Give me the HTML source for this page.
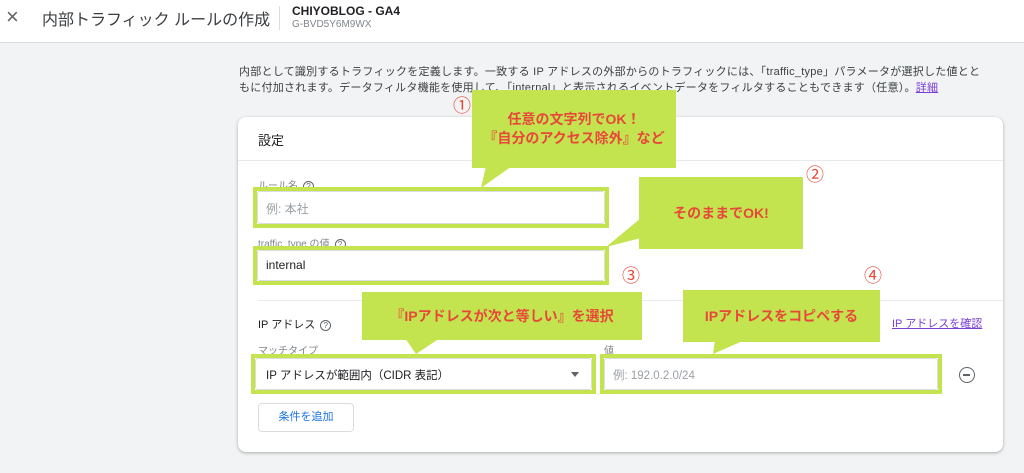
<!DOCTYPE html>
<html><head><meta charset="utf-8"><style>
*{box-sizing:border-box;margin:0;padding:0}
body{width:1024px;height:473px;overflow:hidden;background:#f1f3f4;font-family:"Liberation Sans","Noto Sans CJK JP",sans-serif;position:relative;color:#202124}
.a{position:absolute}
.hdr{left:0;top:0;width:1024px;height:43px;background:#fff;border-bottom:1px solid #dadce0}
.card{left:238px;top:117px;width:765px;height:335px;background:#fff;border-radius:8px;box-shadow:0 1px 3px rgba(0,0,0,.3)}
.lbl{font-size:10px;color:#80868b}
.inp{background:#fff;border:1px solid #dadce0;border-radius:3px}
.g{border:4px solid #c3e44f}
.call{background:#c3e44f;color:#e8483a;font-weight:bold;font-size:14px;text-align:center;display:flex;align-items:center;justify-content:center;line-height:19px}
.num{color:#e8483a;font-size:18px}
.q{display:inline-block;width:11px;height:11px;border:1px solid #5f6368;border-radius:50%;font-size:8px;line-height:9px;text-align:center;color:#5f6368;vertical-align:middle;margin-left:5px}
</style></head><body>
<div class="a hdr"></div>
<div class="a" style="left:6px;top:4px;font-size:22px;color:#5f6368">×</div>
<div class="a" style="left:42px;top:6px;font-size:16px;color:#3c4043">内部トラフィック ルールの作成</div>
<div class="a" style="left:279px;top:6px;width:1px;height:24px;background:#dadce0"></div>
<div class="a" style="left:292px;top:4px;font-size:12px;font-weight:bold">CHIYOBLOG - GA4</div>
<div class="a" style="left:292px;top:19px;font-size:10px;color:#80868b">G-BVD5Y6M9WX</div>
<div class="a" style="left:239px;top:64px;width:750px;font-size:11px;letter-spacing:0.25px;line-height:16px;color:#3c4043">内部として識別するトラフィックを定義します。一致する IP アドレスの外部からのトラフィックには、「traffic_type」パラメータが選択した値とともに付加されます。データフィルタ機能を使用して、「internal」と表示されるイベントデータをフィルタすることもできます（任意）。<span style="color:#7b3fd6;text-decoration:underline">詳細</span></div>
<div class="a card"></div>
<div class="a" style="left:258px;top:130px;font-size:13px">設定</div>
<div class="a" style="left:238px;top:160px;width:765px;height:1px;background:#e8eaed"></div>
<div class="a lbl" style="left:258px;top:177px">ルール名<span class="q">?</span></div>
<div class="a g" style="left:253px;top:187px;width:356px;height:41px"></div>
<div class="a inp" style="left:257px;top:191px;width:348px;height:33px;font-size:12px;color:#9aa0a6;padding:8px 8px">例: 本社</div>
<div class="a lbl" style="left:258px;top:235px">traffic_type の値<span class="q">?</span></div>
<div class="a g" style="left:253px;top:246px;width:356px;height:39px"></div>
<div class="a inp" style="left:257px;top:250px;width:348px;height:31px;font-size:12px;padding:7px 8px">internal</div>
<div class="a" style="left:258px;top:300px;width:745px;height:1px;background:#e8eaed"></div>
<div class="a" style="left:258px;top:316px;font-size:11px">IP アドレス<span class="q">?</span></div>
<div class="a" style="left:892px;top:315px;font-size:11px;color:#7b3fd6;text-decoration:underline">IP アドレスを確認</div>
<div class="a lbl" style="left:258px;top:342px">マッチタイプ</div>
<div class="a lbl" style="left:604px;top:342px">値</div>
<div class="a g" style="left:251px;top:354px;width:345px;height:40px"></div>
<div class="a inp" style="left:255px;top:358px;width:337px;height:32px;font-size:11.5px;padding:8px 10px">IP アドレスが範囲内（CIDR 表記）</div>
<div class="a" style="left:571px;top:372px;width:0;height:0;border-left:4px solid transparent;border-right:4px solid transparent;border-top:5px solid #5f6368"></div>
<div class="a g" style="left:600px;top:354px;width:342px;height:40px"></div>
<div class="a inp" style="left:604px;top:358px;width:334px;height:32px;font-size:11.5px;color:#9aa0a6;padding:8px 8px">例: 192.0.2.0/24</div>
<div class="a" style="left:959px;top:367px;width:16px;height:16px;border:1.5px solid #5f6368;border-radius:50%"><div class="a" style="left:3px;top:6px;width:7px;height:1.5px;background:#5f6368"></div></div>
<div class="a" style="left:258px;top:403px;width:96px;height:29px;border:1px solid #dadce0;border-radius:4px;font-size:11px;color:#1a73e8;text-align:center;line-height:27px">条件を追加</div>

<svg class="a" style="left:0;top:0" width="1024" height="473">
<polygon points="486,166 512,166 481,188" fill="#c3e44f"/>
<polygon points="641,218 641,238 606,247" fill="#c3e44f"/>
<polygon points="405,338 440,338 416,354" fill="#c3e44f"/>
<polygon points="715,340 745,340 713,354" fill="#c3e44f"/>
</svg>
<div class="a call" style="left:472px;top:90px;width:204px;height:78px">任意の文字列でOK！<br>『自分のアクセス除外』など</div>
<div class="a call" style="left:639px;top:177px;width:164px;height:72px">そのままでOK!</div>
<div class="a call" style="left:362px;top:292px;width:280px;height:48px">『IPアドレスが次と等しい』を選択</div>
<div class="a call" style="left:683px;top:290px;width:197px;height:52px">IPアドレスをコピペする</div>
<div class="a num" style="left:453px;top:92px">①</div>
<div class="a num" style="left:806px;top:161px">②</div>
<div class="a num" style="left:622px;top:262px">③</div>
<div class="a num" style="left:864px;top:262px">④</div>
</body></html>
